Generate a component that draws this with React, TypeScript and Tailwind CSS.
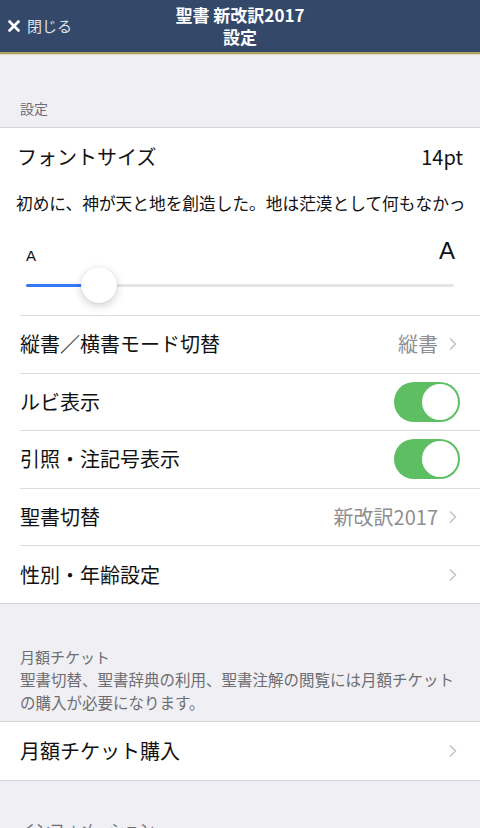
import { X, ChevronRight } from "lucide-react";

const jp = { fontFamily: '"Noto Sans CJK JP", "Noto Sans", sans-serif' };

const Toggle = () => (
    <div className="w-[66px] h-[40px] rounded-full bg-[#5dbf62] flex items-center justify-end pr-[2px]">
        <div className="w-[36px] h-[36px] rounded-full bg-white" />
    </div>
);

const Chevron = () => (
    <ChevronRight className="w-[20px] h-[20px] text-[#c4c4c8] ml-[5px] -mr-[3px]" strokeWidth={2} />
);

const Row = ({ label, value, chevron, toggle, noBorder }: any) => (
    <div className={`h-[57.6px] flex items-center pr-[20px] ${noBorder ? "" : "border-t border-[#dcdce0]"}`}>
        <span className="text-[20px] text-[#111]">{label}</span>
        <div className="flex-1" />
        {value && <span className="text-[20px] text-[#8e8e93]">{value}</span>}
        {chevron && <Chevron />}
        {toggle && <Toggle />}
    </div>
);

export default function App() {
    return (
        <div className="w-[480px] h-[828px] overflow-hidden bg-[#efeff4]" style={jp}>
            <div className="bg-[#34486a] h-[52px] flex items-center text-white">
                <div className="w-[100px] pl-[5px] flex items-center text-[15px] text-[#dfe3ea]">
                    <X className="w-[18px] h-[18px] text-white mr-[4px]" strokeWidth={3.5} />
                    閉じる
                </div>
                <div className="flex-1 flex flex-col items-center font-bold text-[17px] leading-[22px]">
                    <div>聖書 新改訳2017</div>
                    <div>設定</div>
                </div>
                <div className="w-[100px]" />
            </div>
            <div className="h-[2px] bg-[#b2a26a]" />
            <div className="h-[1px] bg-[#ddd6bc]" />

            <div className="h-[72px] flex items-end pb-[8px] pl-[20px] text-[14px] text-[#6d6d72]">設定</div>

            <div className="bg-white border-t border-b border-[#d6d6da]">
                <div className="flex items-center justify-between pl-[17px] pr-[17px] pt-[14px] h-[44px] text-[20px] text-[#111]">
                    <span>フォントサイズ</span>
                    <span>14pt</span>
                </div>
                <div className="ml-[16px] mr-[14px] pt-[19px] h-[50px] overflow-hidden whitespace-nowrap text-[16.7px] leading-[24px] text-[#111]">
                    初めに、神が天と地を創造した。地は茫漠として何もなかった。
                </div>
                <div className="px-[26px] flex items-end justify-between h-[41px] text-[#111]" style={{ fontFamily: '"Liberation Sans", sans-serif' }}>
                    <span className="text-[15px] leading-none">A</span>
                    <span className="text-[24px] leading-none -mr-[1px]">A</span>
                </div>
                <div className="mx-[26px] h-[52px] pb-[8px] relative flex items-center">
                    <div className="w-full h-[3px] rounded-full bg-[#e4e4e6] flex">
                        <div className="w-[70px] h-full rounded-full bg-[#3478f6]" />
                    </div>
                    <div className="absolute left-[55px] top-[4px] w-[36px] h-[36px] rounded-full bg-white shadow-[0_3px_8px_rgba(0,0,0,0.18),0_0_1px_rgba(0,0,0,0.2)]" />
                </div>
                <div className="ml-[20px]">
                    <Row label="縦書／横書モード切替" value="縦書" chevron />
                    <Row label="ルビ表示" toggle />
                    <Row label="引照・注記号表示" toggle />
                    <Row label="聖書切替" value="新改訳2017" chevron />
                    <Row label="性別・年齢設定" chevron />
                </div>
            </div>

            <div className="pt-[41px] pb-[7px] pl-[20px] pr-[20px] text-[15px] leading-[23px] text-[#6d6d72]">
                <div className="text-[15px]">月額チケット</div>
                <div className="text-[15.5px]">聖書切替、聖書辞典の利用、聖書注解の閲覧には月額チケットの購入が必要になります。</div>
            </div>

            <div className="bg-white border-t border-b border-[#d6d6da] pl-[20px]">
                <Row noBorder label="月額チケット購入" chevron />
            </div>

            <div className="pt-[36px] pl-[20px] text-[15px] leading-[23px] text-[#6d6d72]">インフォメーション</div>
        </div>
    );
}
